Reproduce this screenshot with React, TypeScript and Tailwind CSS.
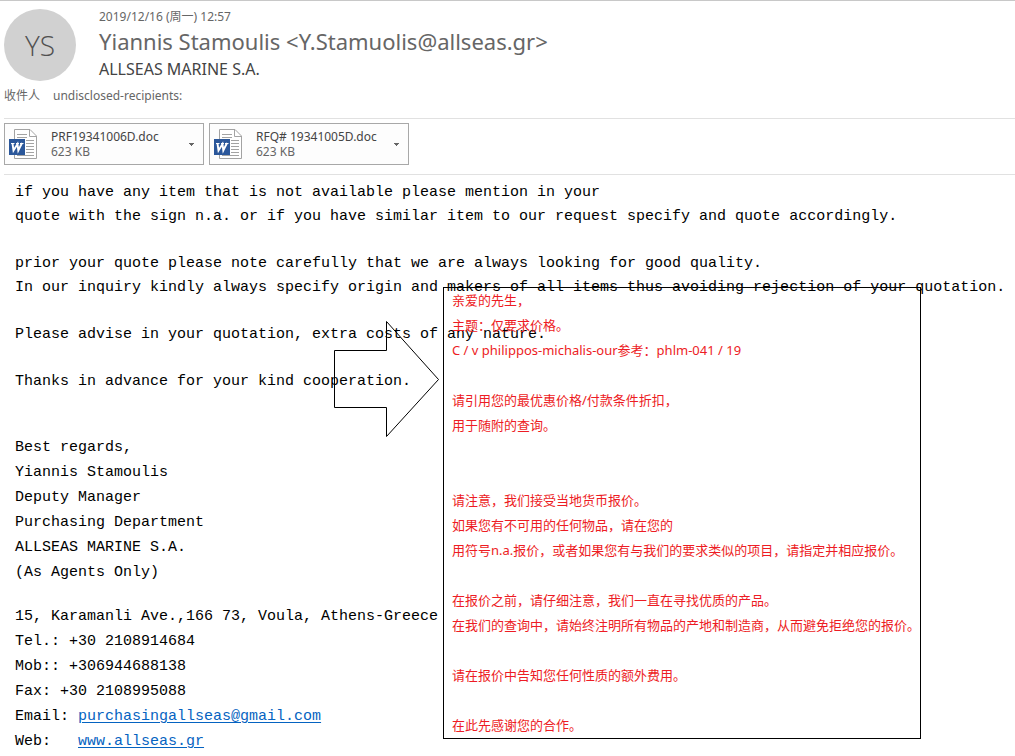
import React from "react";

const attachments = [
  { name: "PRF19341006D.doc", size: "623 KB" },
  { name: "RFQ# 19341005D.doc", size: "623 KB" },
];

const paragraphs = [
  [
    "if you have any item that is not available please mention in your",
    "quote with the sign n.a. or if you have similar item to our request specify and quote accordingly.",
  ],
  [
    "prior your quote please note carefully that we are always looking for good quality.",
    "In our inquiry kindly always specify origin and makers of all items thus avoiding rejection of your quotation.",
  ],
  ["Please advise in your quotation, extra costs of any nature."],
  ["Thanks in advance for your kind cooperation."],
];

const signature = [
  "Best regards,",
  "Yiannis Stamoulis",
  "Deputy Manager",
  "Purchasing Department",
  "ALLSEAS MARINE S.A.",
  "(As Agents Only)",
];

const contact = [
  "15, Karamanli Ave.,166 73, Voula, Athens-Greece",
  "Tel.: +30 2108914684",
  "Mob:: +306944688138",
  "Fax: +30 2108995088",
];

const translation = [
  "亲爱的先生，",
  "主题：仅要求价格。",
  "C / v philippos-michalis-our参考：phlm-041 / 19",
  "",
  "请引用您的最优惠价格/付款条件折扣，",
  "用于随附的查询。",
  "",
  "",
  "请注意，我们接受当地货币报价。",
  "如果您有不可用的任何物品，请在您的",
  "用符号n.a.报价，或者如果您有与我们的要求类似的项目，请指定并相应报价。",
  "",
  "在报价之前，请仔细注意，我们一直在寻找优质的产品。",
  "在我们的查询中，请始终注明所有物品的产地和制造商，从而避免拒绝您的报价。",
  "",
  "请在报价中告知您任何性质的额外费用。",
  "",
  "在此先感谢您的合作。",
];

function WordIcon() {
  return (
    <svg width="28" height="30" viewBox="0 0 28 30" fill="none" className="shrink-0" aria-hidden="true">
      <path d="M5.5 .5H21L27.500 7V29.500H5.500Z" fill="#fff" stroke="#a3a3a3" />
      <path d="M20.500 .5V7.500H27.500" stroke="#a3a3a3" />
      <path d="M8 5.500H18M8 8.500H18M17 11.500H25M17 14.500H25M17 17.500H25M17 20.500H25M17 23.500H25M8 26.500H25" stroke="#a3a3a3" />
      <path d="M0 10H16V26H0Z" fill="#2b579a" />
      <path d="M3.500 14.500L4.500 21.500L8.500 15L9.300 21.500L13 14" stroke="#fff" strokeWidth="1.900" />
      <path d="M2 14.500H5.500M7 14.500H10M11 14.500H14.500" stroke="#fff" />
    </svg>
  );
}

function Attachment({ name, size }: { name: string; size: string }) {
  return (
    <button
      type="button"
      className="flex h-[42px] w-[200px] items-center border border-[#a8a8a8] bg-[#fdfdfd] pr-[9px] pl-1 text-left text-xs leading-[15px] text-[#666]"
    >
      <WordIcon />
      <span className="ml-3.5 flex-1 whitespace-nowrap">
        <span className="block text-[#444]">{name}</span>
        <span className="block">{size}</span>
      </span>
      <svg width="5" height="3" viewBox="0 0 5 3" aria-hidden="true">
        <path d="M0 0H5V1H4V2H3V3H2V2H1V1H0Z" fill="#666" />
      </svg>
    </button>
  );
}

export default function App() {
  return (
    <main className="overflow-hidden border-t border-[#c8c8c8] bg-white font-['Noto_Sans','Noto_Sans_CJK_SC',sans-serif] text-[#666]">
      <header className="pl-1">
        <div className="flex gap-[23px] pt-2">
          <div className="flex size-[72px] shrink-0 items-center justify-center rounded-full bg-[#d1d1d1] font-['Open_Sans',sans-serif] text-[28px] font-light text-[#505050]">
            YS
          </div>
          <div className="whitespace-nowrap">
            <p className="text-xs leading-4">2019/12/16 (周一) 12:57</p>
            <h1 className="text-[22px] leading-8">Yiannis Stamoulis &lt;Y.Stamuolis@allseas.gr&gt;</h1>
            <h2 className="text-base leading-6 text-[#444]">ALLSEAS MARINE S.A.</h2>
          </div>
        </div>
        <p className="flex gap-[13px] pt-[7px] pb-3.5 text-xs leading-4">
          <span>收件人</span>
          <span>undisclosed-recipients:</span>
        </p>
        <div className="flex gap-[5px] border-y border-[#e1e1e1] pt-1 pb-[9px]">
          {attachments.map((a) => (
            <Attachment key={a.name} {...a} />
          ))}
        </div>
      </header>

      <div className="relative pt-1.5 pl-[15px] font-['Liberation_Mono',monospace] text-[15px] whitespace-pre text-black">
        <div className="flex flex-col gap-[23px] leading-6">
          {paragraphs.map((lines) => (
            <div key={lines[0]}>
              {lines.map((line) => (
                <p key={line}>{line}</p>
              ))}
            </div>
          ))}
        </div>
        <div className="pt-[41px] leading-[25px]">
          {signature.map((line) => (
            <p key={line}>{line}</p>
          ))}
        </div>
        <address className="pt-[19px] leading-[25px] not-italic">
          {contact.map((line) => (
            <p key={line}>{line}</p>
          ))}
          <p>
            {"Email: "}
            <a href="mailto:purchasingallseas@gmail.com" className="text-[#0563c1] underline underline-offset-2">
              purchasingallseas@gmail.com
            </a>
          </p>
          <p>
            {"Web:   "}
            <a href="http://www.allseas.gr" className="text-[#0563c1] underline underline-offset-2">
              www.allseas.gr
            </a>
          </p>
        </address>

        <svg
          width="106"
          height="117"
          viewBox="0 0 106 117"
          className="absolute top-[146px] left-[334px]"
          fill="none"
          stroke="#000"
          aria-hidden="true"
        >
          <path d="M.5 29.500H52.500V.5L104.500 58.500L52.500 115.500V86.500H.5Z" />
        </svg>
        <aside
          lang="zh-CN"
          className="absolute top-28 left-[443px] w-[478px] border border-black pl-2 font-['Noto_Sans','Noto_Sans_CJK_SC',sans-serif] text-[13px] leading-[25px] text-[#ed1c24]"
        >
          {translation.map((line, i) => (
            <p key={i} className="h-[25px]">
              {line}
            </p>
          ))}
        </aside>
      </div>
    </main>
  );
}
